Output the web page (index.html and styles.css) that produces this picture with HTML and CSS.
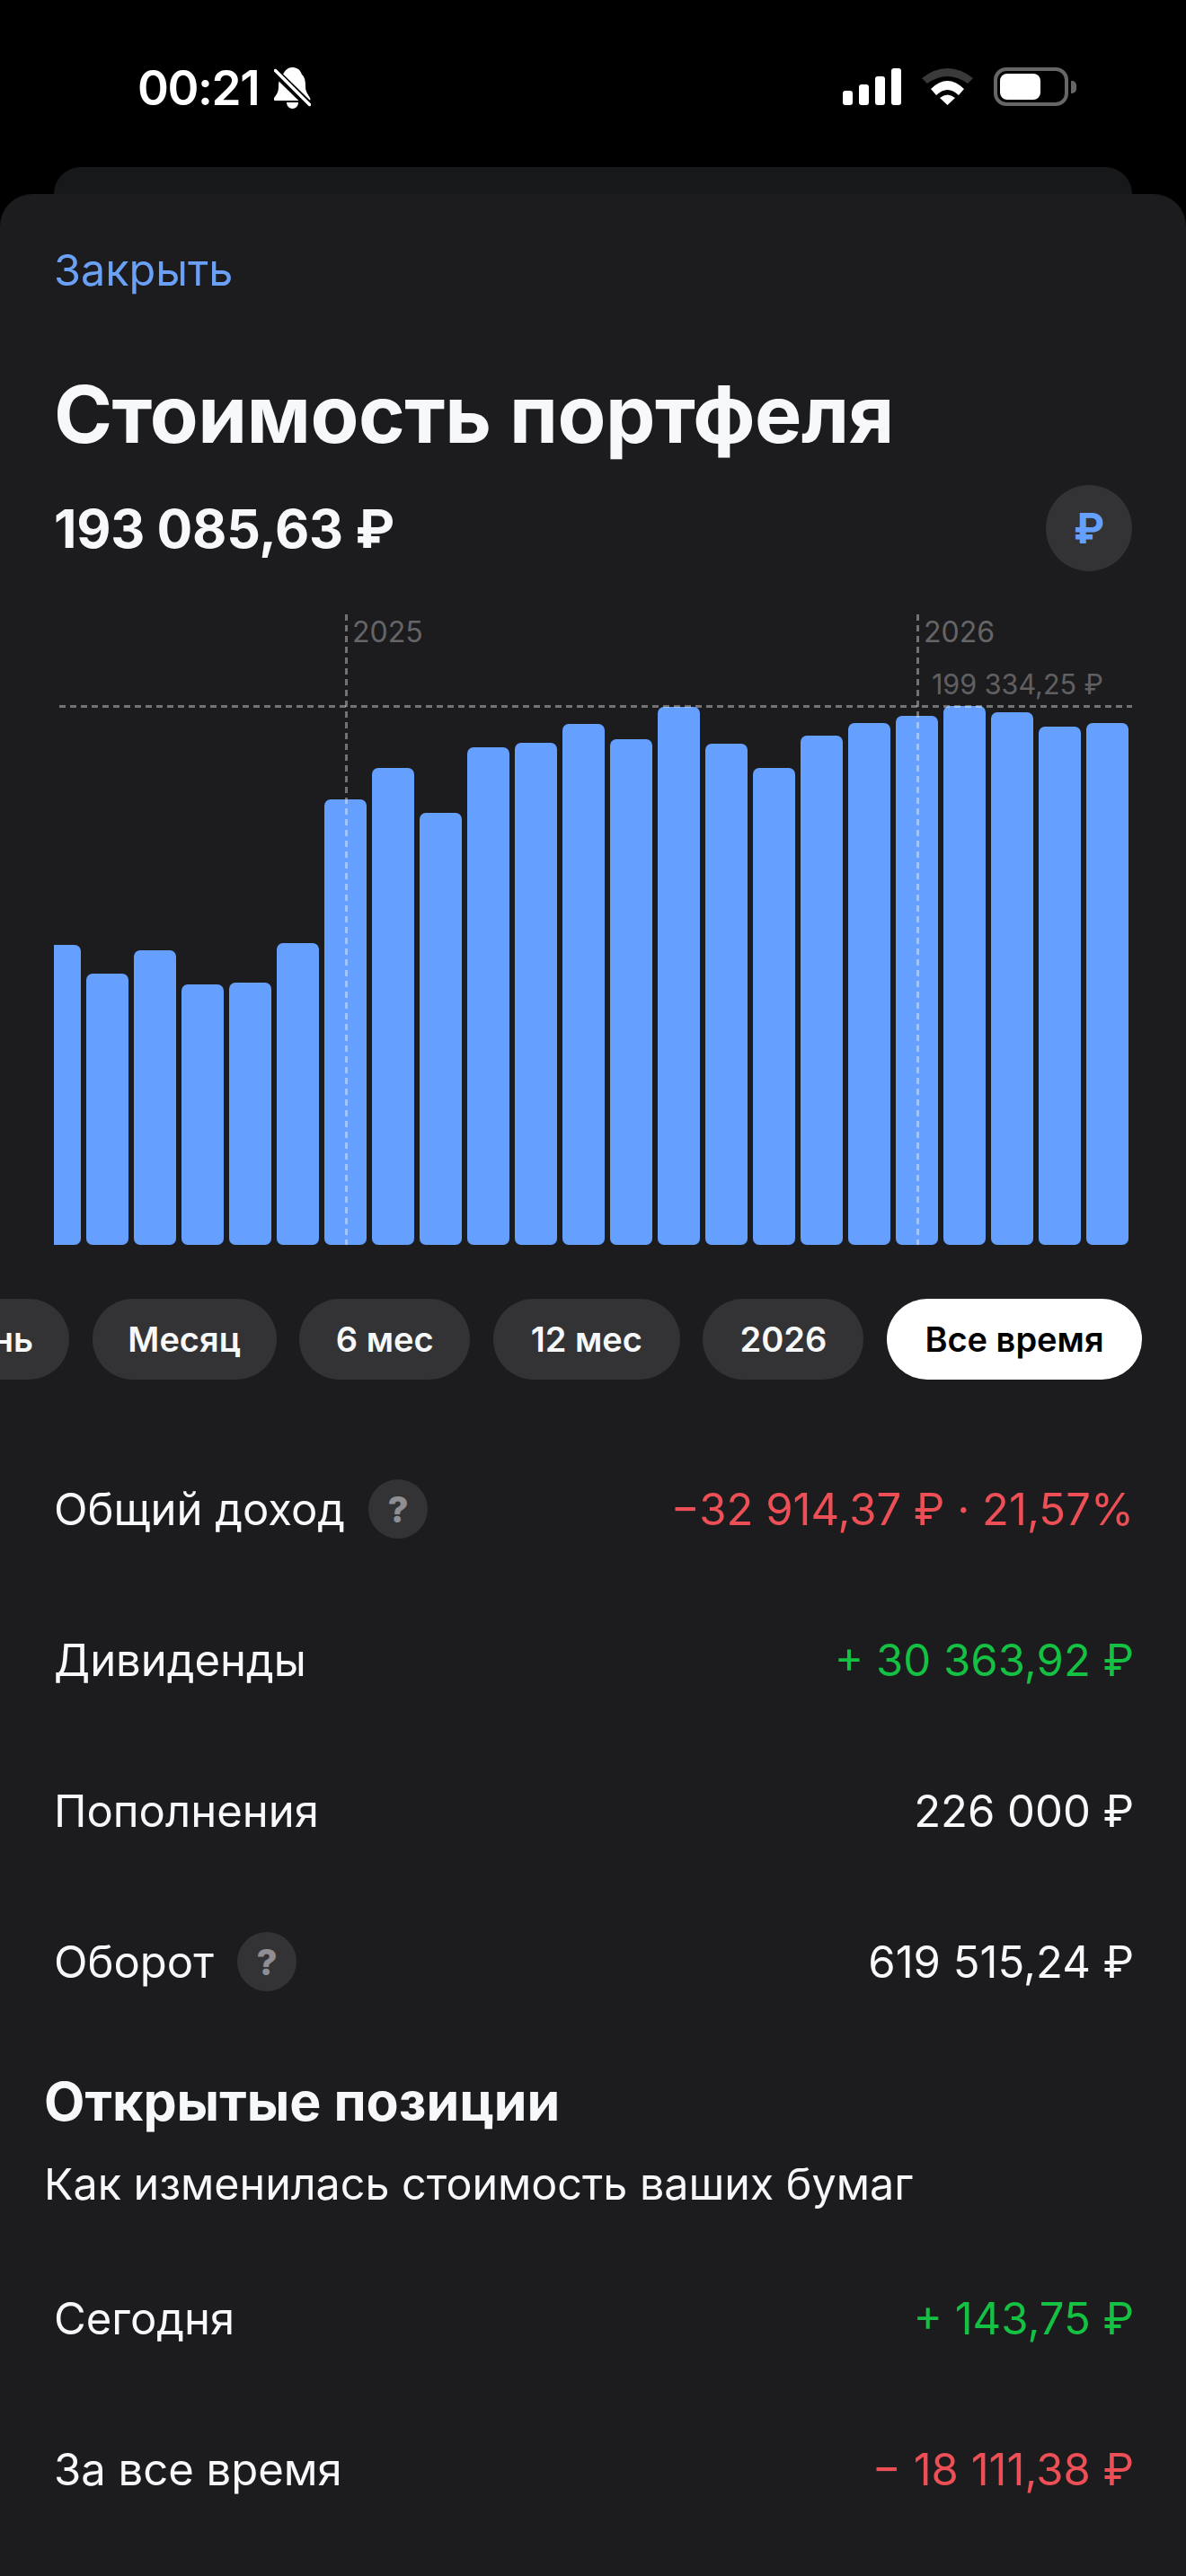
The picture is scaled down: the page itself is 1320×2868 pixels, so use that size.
FILE: index.html
```html
<!DOCTYPE html>
<html lang="ru">
<head>
  <meta charset="UTF-8">
  <meta name="viewport" content="width=device-width, initial-scale=1.0">
  <title>Стоимость портфеля</title>
  <link rel="stylesheet" href="styles.css">
</head>
<body>
  <div class="status-bar">
    <div class="status-left">
      <span class="clock">00:21</span>
      <svg class="bell" width="41" height="46" viewBox="0 0 41 46">
        <path d="M20 0c5 0 9 2 11 8 4 3 4 10 4 14 0 5 3 8 5 12 1 2 0 3-2 3H2c-2 0-3-1-2-3 3-4 5-7 5-12 0-6 1-11 5-14 2-5 6-8 10-8z" fill="#fff"/>
        <path d="M14 39h13c0 4-3 7-6.500 7S14 43 14 39z" fill="#fff"/>
        <path d="M-2 2l44 43" stroke="#000" stroke-width="9"/>
        <path d="M1.500 3.500l38 38" stroke="#fff" stroke-width="3.500" stroke-linecap="round"/>
      </svg>
    </div>
    <div class="status-right">
      <svg width="65" height="41" viewBox="0 0 65 41" fill="#fff">
        <rect x="0" y="25" width="11" height="16" rx="3"/>
        <rect x="18" y="18" width="11" height="23" rx="3"/>
        <rect x="36" y="9" width="11" height="32" rx="3"/>
        <rect x="54" y="0" width="11" height="41" rx="3"/>
      </svg>
      <svg width="57" height="41" viewBox="0 0 57 41">
        <path d="M0 11Q28.500-11 57 11L51 17Q28.500 1 6 17Z" fill="#3a3a3a"/>
        <path d="M10 23Q28.500 5 47 23L41 30Q28.500 18 16 30Z" fill="#fff"/>
        <path d="M20 33Q28.500 26 37 33L28.500 41Z" fill="#fff"/>
      </svg>
      <div class="battery">
        <div class="battery-body"><div class="battery-fill"></div></div>
        <div class="battery-cap"></div>
      </div>
    </div>
  </div>

  <div class="sheet-back"></div>
  <div class="sheet">
    <a class="close-link">Закрыть</a>
    <h1 class="title">Стоимость портфеля</h1>
    <div class="total-row">
      <span class="total">193 085,63 ₽</span>
      <span class="currency-btn">₽</span>
    </div>

    <div class="chart">
      <div class="bars" id="bars"></div>
      <div class="max-line"></div>
      <div class="year-line year-2025"><span>2025</span></div>
      <div class="year-line year-2026"><span>2026</span></div>
      <span class="max-label">199 334,25 ₽</span>
    </div>

    <div class="periods">
      <span class="pill pill-cut">нь</span>
      <span class="pill">Месяц</span>
      <span class="pill">6 мес</span>
      <span class="pill">12 мес</span>
      <span class="pill">2026</span>
      <span class="pill pill-active">Все время</span>
    </div>

    <div class="rows">
      <div class="row">
        <span class="row-label">Общий доход <i class="hint">?</i></span>
        <span class="loss">−32 914,37 ₽ · 21,57%</span>
      </div>
      <div class="row">
        <span class="row-label">Дивиденды</span>
        <span class="gain">+ 30 363,92 ₽</span>
      </div>
      <div class="row">
        <span class="row-label">Пополнения</span>
        <span>226 000 ₽</span>
      </div>
      <div class="row">
        <span class="row-label">Оборот <i class="hint">?</i></span>
        <span>619 515,24 ₽</span>
      </div>
    </div>

    <div class="section-head">
      <h2>Открытые позиции</h2>
      <p>Как изменилась стоимость ваших бумаг</p>
    </div>

    <div class="rows rows-open">
      <div class="row">
        <span class="row-label">Сегодня</span>
        <span class="gain">+ 143,75 ₽</span>
      </div>
      <div class="row">
        <span class="row-label">За все время</span>
        <span class="loss">− 18 111,38 ₽</span>
      </div>
    </div>
  </div>

  <script>
    // высоты столбиков, px от нижней линии графика
    var heights = [334, 302, 328, 290, 292, 336, 496, 531, 481, 554, 559, 580, 563, 599, 558, 531, 567, 581, 589, 600, 593, 577, 581];
    var bars = document.getElementById('bars');
    heights.forEach(function (h, i) {
      var bar = document.createElement('div');
      bar.className = i === 0 ? 'bar bar-first' : 'bar';
      bar.style.height = h + 'px';
      bars.appendChild(bar);
    });
  </script>
</body>
</html>
```

FILE: styles.css
```css
* {
  box-sizing: border-box;
}
html, body {
  margin: 0;
  padding: 0;
}
body {
  width: 1320px;
  height: 2868px;
  overflow: hidden;
  background-color: #000;
  color: #f7f8fa;
  font-family: Inter, "Liberation Sans", sans-serif;
}

/* Статус-бар */
.status-bar {
  height: 186px;
  display: flex;
  justify-content: space-between;
  align-items: flex-start;
  padding: 71px 122px 0 153px;
}
.status-left, .status-right {
  display: flex;
  align-items: center;
}
.status-left {
  gap: 17px;
}
.status-right {
  gap: 23px;
  padding-top: 4px;
}
.clock {
  font-size: 53px;
  line-height: 54px;
  font-weight: 600;
  letter-spacing: -1.4px;
  color: #fff;
}
.battery {
  display: flex;
  align-items: center;
  gap: 3px;
}
.battery-body {
  width: 83px;
  height: 43px;
  padding: 3px;
  border: 4px solid #666;
  border-radius: 14px;
}
.battery-fill {
  width: 45px;
  height: 100%;
  background: #fff;
  border-radius: 8px;
}
.battery-cap {
  width: 6px;
  height: 14px;
  background: #666;
  border-radius: 0 5px 5px 0;
}

/* Карточки-листы */
.sheet-back {
  height: 30px;
  margin: 0 60px;
  background: #17181a;
  border-radius: 36px 36px 0 0;
}
.sheet {
  height: 2652px;
  padding: 58px 60px 0;
  background: #1c1c1e;
  border-radius: 36px 36px 0 0;
  overflow: hidden;
}
.close-link {
  display: block;
  font-size: 48.500px;
  line-height: 54px;
  color: #6aa0f5;
}
.title {
  margin: 83px 0 0;
  font-size: 88px;
  line-height: 100px;
  font-weight: 700;
  letter-spacing: -0.5px;
}
.total-row {
  display: flex;
  justify-content: space-between;
  align-items: center;
  margin-top: 29px;
  height: 96px;
}
.total {
  font-size: 59px;
  font-weight: 700;
  letter-spacing: -0.3px;
}
.currency-btn {
  width: 96px;
  height: 96px;
  display: flex;
  align-items: center;
  justify-content: center;
  border-radius: 50%;
  background: #333335;
  color: #66a0ff;
  font-size: 46px;
  font-weight: 700;
}

/* График */
.chart {
  position: relative;
  height: 702px;
  margin-top: 48px;
}
.bars {
  height: 100%;
  display: flex;
  align-items: flex-end;
  gap: 6px;
}
.bar {
  width: 47px;
  background: #66a0ff;
  border-radius: 7px;
}
.bar-first {
  width: 30px;
  border-radius: 0 7px 7px 0;
}
.max-line {
  position: absolute;
  left: 6px;
  right: 0;
  top: 101px;
  height: 3px;
  background: repeating-linear-gradient(90deg, rgba(255, 255, 255, 0.38) 0 7px, transparent 7px 12px);
}
.year-line {
  position: absolute;
  top: 0;
  bottom: 0;
  width: 3px;
  background: repeating-linear-gradient(180deg, rgba(255, 255, 255, 0.38) 0 7px, transparent 7px 12px);
}
.year-2025 {
  left: 324px;
}
.year-2026 {
  left: 960px;
}
.year-line span {
  position: absolute;
  left: 8px;
  top: 1px;
  font-size: 32px;
  line-height: 38px;
  color: #656567;
}
.max-label {
  position: absolute;
  right: 32px;
  top: 60px;
  font-size: 30.500px;
  line-height: 36px;
  color: #606062;
}

/* Переключатель периода */
.periods {
  display: grid;
  grid-template-columns: 77px 205px 190px 208px 179px 284px;
  gap: 25.600px;
  margin: 60px -60px 0 -60px;
  height: 90px;
}
.pill {
  height: 90px;
  display: flex;
  align-items: center;
  justify-content: center;
  background: #333335;
  border-radius: 45px;
  font-size: 38px;
  font-weight: 600;
  white-space: nowrap;
}
.pill-cut {
  padding-right: 40px;
  justify-content: flex-end;
  border-radius: 0 45px 45px 0;
}
.pill-active {
  background: #fff;
  color: #000;
}

/* Строки */
.rows {
  margin-top: 60px;
}
.row {
  height: 168px;
  margin-right: -2px;
  display: flex;
  justify-content: space-between;
  align-items: center;
  font-size: 49px;
  font-weight: 400;
}
.row-label {
  display: flex;
  align-items: center;
  gap: 26px;
  color: #f7f8fa;
}
.hint {
  width: 66px;
  height: 66px;
  display: flex;
  align-items: center;
  justify-content: center;
  border-radius: 50%;
  background: #333336;
  color: #8e8e93;
  font-size: 40px;
  font-weight: 800;
  font-style: normal;
}
.loss {
  color: #ec4f55;
}
.gain {
  color: #14c143;
}
.section-head {
  margin: 38px 0 0 -11px;
}
.section-head h2 {
  margin: 0;
  font-size: 59px;
  line-height: 68px;
  font-weight: 700;
}
.section-head p {
  margin: 30px 0 0;
  font-size: 48.400px;
  line-height: 56px;
  color: #f7f8fa;
}
.rows-open {
  margin-top: 37px;
}
```
